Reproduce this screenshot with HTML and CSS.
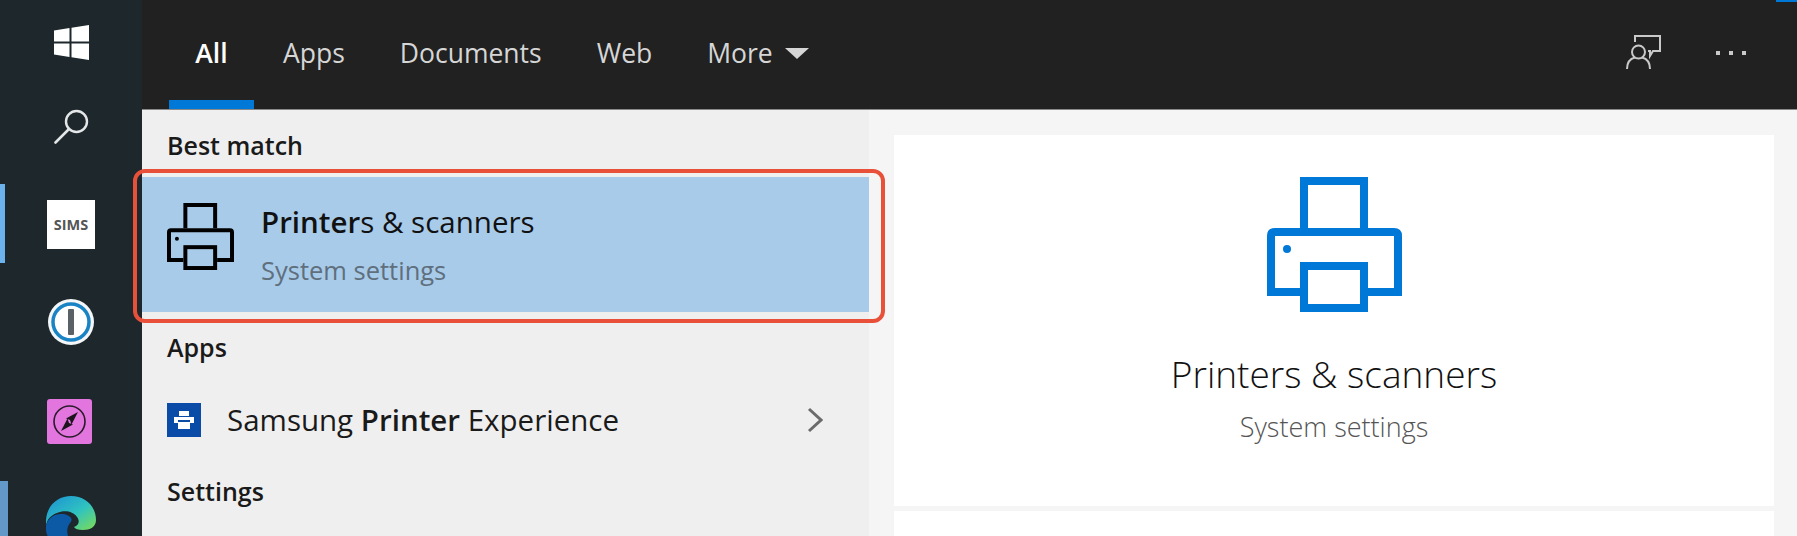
FILE: index.html
```html
<!DOCTYPE html>
<html lang="en">
<head>
  <meta charset="UTF-8" />
  <title>Search</title>
  <link rel="stylesheet" href="styles.css">
</head>
<body>
  <aside class="taskbar">
    <span class="accent accent-sims"></span>
    <span class="accent accent-edge"></span>

    <svg class="task-icon icon-win" viewBox="0 0 35 35">
      <path fill="#fff" d="M0 5.5 15.5 3V16.5H0ZM17.5 2.7 35 0V16.5H17.5ZM0 18.5H15.5V32L0 29.5ZM17.5 18.5H35V35L17.5 32.3Z"/>
    </svg>

    <svg class="task-icon icon-search" viewBox="0 0 35 35">
      <circle cx="22.5" cy="12.5" r="10.5" fill="none" stroke="#e4e6e7" stroke-width="2.4"/>
      <path d="M15 20 1.5 33.5" fill="none" stroke="#e4e6e7" stroke-width="2.6" stroke-linecap="round"/>
    </svg>

    <div class="tile-sims">SIMS</div>

    <svg class="task-icon icon-onepass" viewBox="0 0 46 46">
      <circle cx="23" cy="23" r="23" fill="#f4f6f7"/>
      <circle cx="23" cy="23" r="18" fill="#fff" stroke="#1a83c4" stroke-width="3.5"/>
      <rect x="20" y="10" width="6" height="26" rx="1" fill="#5a6268"/>
    </svg>

    <svg class="task-icon icon-pink" viewBox="0 0 45 45">
      <rect width="45" height="45" rx="3" fill="#e376de"/>
      <circle cx="22.5" cy="22.5" r="15.5" fill="none" stroke="#2a1a2a" stroke-width="1.6"/>
      <path fill="#1d141d" d="M31 13 19 19.5 23 21 24.5 25.5ZM14 32 26 25.5 22 24 20.5 19.5Z"/>
    </svg>

    <svg class="task-icon icon-edge" viewBox="0 0 50 50">
      <defs>
        <linearGradient id="edgeTop" x1="0" y1="0" x2="1" y2="1">
          <stop offset="0" stop-color="#1b8fd6"/>
          <stop offset="0.55" stop-color="#2fc3c0"/>
          <stop offset="1" stop-color="#7fdc54"/>
        </linearGradient>
      </defs>
      <path fill="url(#edgeTop)" d="M0 24C1 9 12 0 25 0 40 0 50 11 50 24 50 31 44 34 37 34 32 34 29 33 28 31 33 29 34 25 31 21 27 15 18 14 11 17 5 19 1 23 0 30Z"/>
      <path fill="#0c5aa6" d="M0 30C1 23 8 17 17 18 24 19 28 23 24 27 20 32 20 40 26 46 28 48 30 50 32 50H12C4 46-1 39 0 30Z"/>
    </svg>
  </aside>

  <div class="panel">
    <header class="topbar">
      <nav class="tabs">
        <a class="tab tab-active">All</a>
        <a class="tab">Apps</a>
        <a class="tab">Documents</a>
        <a class="tab">Web</a>
        <a class="tab">More <span class="caret"></span></a>
      </nav>
      <div class="top-actions">
        <svg class="icon-feedback" viewBox="0 0 35 35" fill="none" stroke="#c9c9c9" stroke-width="2">
          <path d="M9 7V1H34V16H27L24 21V16H22"/>
          <circle cx="12.5" cy="17" r="6.5"/>
          <path d="M1 34C1 27 5 23.5 9 22.5M24 34C24 27 20 23.5 16 22.5"/>
        </svg>
        <div class="dots"><i></i><i></i><i></i></div>
      </div>
    </header>

    <div class="content">
      <main class="results">
        <h3 class="group-title first">Best match</h3>
        <div class="best-match">
          <svg class="printer-small" viewBox="0 0 135 135" fill="none" stroke="#000" stroke-width="8">
            <path d="M37 51V4H97V51"/>
            <path d="M33 115H4V59Q4 55 8 55H127Q131 55 131 59V115H101"/>
            <rect x="37" y="89" width="60" height="42"/>
            <circle cx="20" cy="72" r="4" fill="#000" stroke="none"/>
          </svg>
          <div>
            <div class="match-name"><b>Printer</b>s &amp; scanners</div>
            <div class="match-sub">System settings</div>
          </div>
        </div>

        <h3 class="group-title apps">Apps</h3>
        <div class="app-row">
          <svg class="samsung-icon" viewBox="0 0 34 34">
            <rect width="34" height="34" fill="#0b4ba8"/>
            <path fill="#fff" d="M12 8H22V13H12ZM7 14H27V20H23V17H11V20H7ZM11 19H23V26H11Z"/>
          </svg>
          <span class="app-name">Samsung <b>Printer</b> Experience</span>
          <svg class="chevron" viewBox="0 0 16 26" fill="none" stroke="#6b6b6b" stroke-width="3">
            <path d="M2 2 14 13 2 24"/>
          </svg>
        </div>

        <h3 class="group-title settings">Settings</h3>
      </main>

      <section class="detail">
        <div class="detail-card">
          <svg class="printer-large" viewBox="0 0 135 135" fill="none" stroke="#0078d7" stroke-width="8">
            <path d="M37 51V4H97V51"/>
            <path d="M33 115H4V59Q4 55 8 55H127Q131 55 131 59V115H101"/>
            <rect x="37" y="89" width="60" height="42"/>
            <circle cx="20" cy="72" r="4" fill="#0078d7" stroke="none"/>
          </svg>
          <div class="detail-name">Printers &amp; scanners</div>
          <div class="detail-sub">System settings</div>
        </div>
        <div class="detail-card-empty"></div>
      </section>
    </div>
  </div>

  <div class="highlight-ring"></div>
  <span class="corner-mark"></span>
</body>
</html>
```

FILE: styles.css
```css
:root {
  --taskbar: #1d272c;
  --topbar: #212121;
  --lista: #efefef;
  --fundo: #f5f5f5;
  --azul: #0078d7;
  --selecao: #a8cbea;
  --vermelho: #e8503a;
}

* {
  box-sizing: border-box;
}

html, body {
  height: 536px;
  overflow: hidden;
}

body {
  margin: 0;
  display: flex;
  position: relative;
  font-family: "Open Sans", "Noto Sans", sans-serif;
  background-color: var(--fundo);
  color: #1a1a1a;
}

.taskbar {
  width: 142px;
  flex-shrink: 0;
  display: flex;
  flex-direction: column;
  align-items: center;
  padding-top: 25px;
  position: relative;
  overflow: hidden;
  background-color: var(--taskbar);
}

.accent {
  position: absolute;
  left: 0;
}

.accent-sims {
  top: 184px;
  width: 5px;
  height: 79px;
  background-color: #6cb2ec;
}

.accent-edge {
  top: 481px;
  width: 8px;
  height: 55px;
  background-color: #6299c8;
}

.task-icon {
  display: block;
  flex-shrink: 0;
}

.icon-win {
  width: 35px;
  height: 35px;
}

.icon-search {
  width: 35px;
  height: 35px;
  margin-top: 49px;
}

.tile-sims {
  width: 48px;
  height: 49px;
  flex-shrink: 0;
  margin-top: 56px;
  display: flex;
  align-items: center;
  justify-content: center;
  background-color: #fff;
  color: #555;
  font-size: 14.5px;
  font-weight: 700;
}

.icon-onepass {
  width: 46px;
  height: 46px;
  margin-top: 50px;
}

.icon-pink {
  width: 45px;
  height: 45px;
  margin-top: 54px;
  margin-left: -3px;
}

.icon-edge {
  width: 50px;
  height: 50px;
  margin-top: 52px;
}

.panel {
  flex: 1;
  display: flex;
  flex-direction: column;
  min-width: 0;
}

.topbar {
  height: 110px;
  flex-shrink: 0;
  display: flex;
  justify-content: space-between;
  background-color: var(--topbar);
  border-bottom: 1px solid #8a8a8a;
}

.tabs {
  display: flex;
  padding-left: 27px;
  gap: 55px;
}

.tab {
  height: 109px;
  padding-top: 36px;
  color: #d6d6d6;
  font-size: 26.5px;
  line-height: 35px;
  white-space: nowrap;
}

.tab-active {
  width: 85px;
  margin-right: -26px;
  text-align: center;
  color: #fff;
  font-weight: 600;
  border-bottom: 9px solid var(--azul);
}

.caret {
  display: inline-block;
  margin-left: 5px;
  vertical-align: 4px;
  border-left: 12px solid transparent;
  border-right: 12px solid transparent;
  border-top: 11px solid #d6d6d6;
}

.top-actions {
  display: flex;
  align-items: center;
  gap: 55px;
  padding-right: 51px;
  padding-bottom: 4px;
}

.icon-feedback {
  width: 35px;
  height: 35px;
}

.dots {
  display: flex;
  gap: 9px;
}

.dots i {
  width: 4px;
  height: 4px;
  background-color: #c9c9c9;
}

.content {
  flex: 1;
  display: flex;
  min-height: 0;
}

.results {
  width: 727px;
  flex-shrink: 0;
  background-color: var(--lista);
}

.group-title {
  margin: 0;
  padding-left: 25px;
  font-size: 25px;
  line-height: 32px;
  font-weight: 600;
}

.group-title.first {
  padding-top: 19px;
}

.group-title.apps {
  padding-top: 19px;
}

.group-title.settings {
  margin-top: 19px;
}

.best-match {
  height: 135px;
  margin-top: 16px;
  display: flex;
  align-items: center;
  gap: 27px;
  padding-left: 25px;
  background-color: var(--selecao);
}

.printer-small {
  width: 67px;
  height: 67px;
  flex-shrink: 0;
  margin-bottom: 16px;
}

.match-name {
  font-size: 29.5px;
  line-height: 34px;
  color: #111;
}

.match-name b, .app-name b {
  font-weight: 600;
}

.match-sub {
  margin-top: 16px;
  font-size: 25.5px;
  line-height: 30px;
  color: #5f6f7d;
}

.app-row {
  height: 72px;
  margin-top: 21px;
  display: flex;
  align-items: center;
  padding-left: 25px;
  padding-right: 46px;
}

.samsung-icon {
  width: 34px;
  height: 34px;
  flex-shrink: 0;
}

.app-name {
  margin-left: 26px;
  font-size: 29.5px;
  line-height: 34px;
  white-space: nowrap;
}

.chevron {
  width: 16px;
  height: 26px;
  margin-left: auto;
}

.detail {
  flex: 1;
  padding: 25px 23px 0 25px;
  display: flex;
  flex-direction: column;
  gap: 5px;
  min-width: 0;
}

.detail-card {
  height: 371px;
  flex-shrink: 0;
  display: flex;
  flex-direction: column;
  align-items: center;
  padding-top: 42px;
  background-color: #fff;
}

.detail-card-empty {
  flex: 1;
  background-color: #fff;
}

.printer-large {
  width: 135px;
  height: 135px;
  flex-shrink: 0;
}

.detail-name {
  margin-top: 41px;
  font-size: 37px;
  line-height: 42px;
  font-weight: 300;
  color: #111;
}

.detail-sub {
  margin-top: 17px;
  font-size: 27px;
  line-height: 30px;
  font-weight: 300;
  color: #555;
}

/* anel vermelho desenhado por cima do resultado */
.highlight-ring {
  position: absolute;
  left: 133px;
  top: 169px;
  width: 752px;
  height: 154px;
  border: 4px solid var(--vermelho);
  border-radius: 12px;
}

.corner-mark {
  position: absolute;
  right: 0;
  top: 0;
  width: 21px;
  height: 2px;
  background-color: var(--azul);
}
```
